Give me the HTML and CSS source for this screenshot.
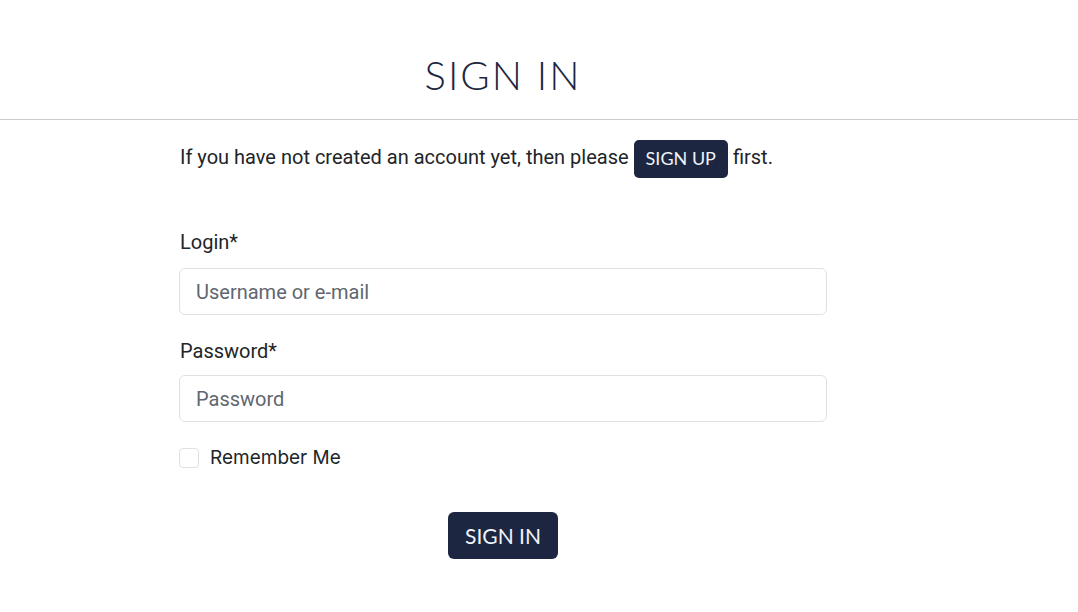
FILE: index.html
```html
<!DOCTYPE html>
<html lang="en">
<head>
<meta charset="utf-8">
<title>Sign In</title>
<link rel="stylesheet" href="styles.css">
</head>
<body>
<header class="page-head">
  <div class="column">
    <h1 class="title">SIGN IN</h1>
  </div>
</header>
<main class="column">
  <p class="intro"><span class="intro-text">If you have not created an account yet, then please</span> <a class="btn btn-sm" href="#">SIGN UP</a> <span class="intro-text">first.</span></p>
  <form class="form">
    <div class="group">
      <label class="label" for="login">Login*</label>
      <input class="input" id="login" type="text" placeholder="Username or e-mail">
    </div>
    <div class="group">
      <label class="label" for="password">Password*</label>
      <input class="input" id="password" type="password" placeholder="Password">
    </div>
    <label class="check">
      <span class="box"></span>
      <span class="check-text">Remember Me</span>
    </label>
    <div class="actions">
      <button class="btn btn-lg" type="button">SIGN IN</button>
    </div>
  </form>
</main>
</body>
</html>
```

FILE: styles.css
```css
html, body {
  margin: 0;
  padding: 0;
  background: #ffffff;
}
body {
  font-family: Roboto, "Liberation Sans", sans-serif;
  font-size: 20px;
  line-height: 1.5;
  color: #212529;
}
.column {
  width: 648px;
  margin-left: 179px;
}
.page-head {
  border-bottom: 1px solid #cccccc;
}
.title {
  margin: 0;
  padding: 51px 0 20px;
  text-align: center;
  font-family: Lato, "Open Sans", sans-serif;
  font-weight: 300;
  font-size: 40px;
  line-height: 48px;
  letter-spacing: 2px;
  color: #1c2640;
}
.intro {
  margin: 20px 0 0;
  display: flex;
  align-items: center;
  gap: 5px;
  height: 38px;
  padding-left: 1px;
}
.intro-text {
  position: relative;
  top: -2px;
}
.btn {
  display: inline-block;
  background: #1c2640;
  color: #eef3fa;
  font-family: Lato, "Open Sans", sans-serif;
  text-decoration: none;
  border: none;
  border-radius: 5px;
  cursor: pointer;
}
.btn-sm {
  font-size: 18px;
  line-height: 24px;
  padding: 6px 12px 8px;
}
.form {
  margin-top: 51px;
}
.group {
  margin-bottom: 23px;
}
.label {
  display: block;
  line-height: 27px;
  margin-bottom: 12px;
  padding-left: 1px;
}
.group + .group .label {
  margin-bottom: 10px;
}
.input {
  display: block;
  box-sizing: border-box;
  width: 100%;
  height: 47px;
  padding: 0 16px;
  border: 1px solid #dee2e6;
  border-radius: 6px;
  font-family: Roboto, "Liberation Sans", sans-serif;
  font-size: 20px;
  color: #212529;
  background: #fff;
}
.input::placeholder {
  color: #5f6670;
}
.check {
  display: flex;
  align-items: center;
  gap: 11px;
  margin-top: 26px;
  height: 20px;
}
.box {
  box-sizing: border-box;
  width: 20px;
  height: 20px;
  border: 1px solid #dee2e6;
  border-radius: 4px;
}
.check-text {
  font-family: Inter, Roboto, sans-serif;
  font-size: 19px;
  color: #212529;
}
.actions {
  margin-top: 44px;
  display: flex;
  justify-content: center;
}
.btn-lg {
  font-size: 21px;
  line-height: 27px;
  padding: 10px 17px;
  border-radius: 6px;
}
```
